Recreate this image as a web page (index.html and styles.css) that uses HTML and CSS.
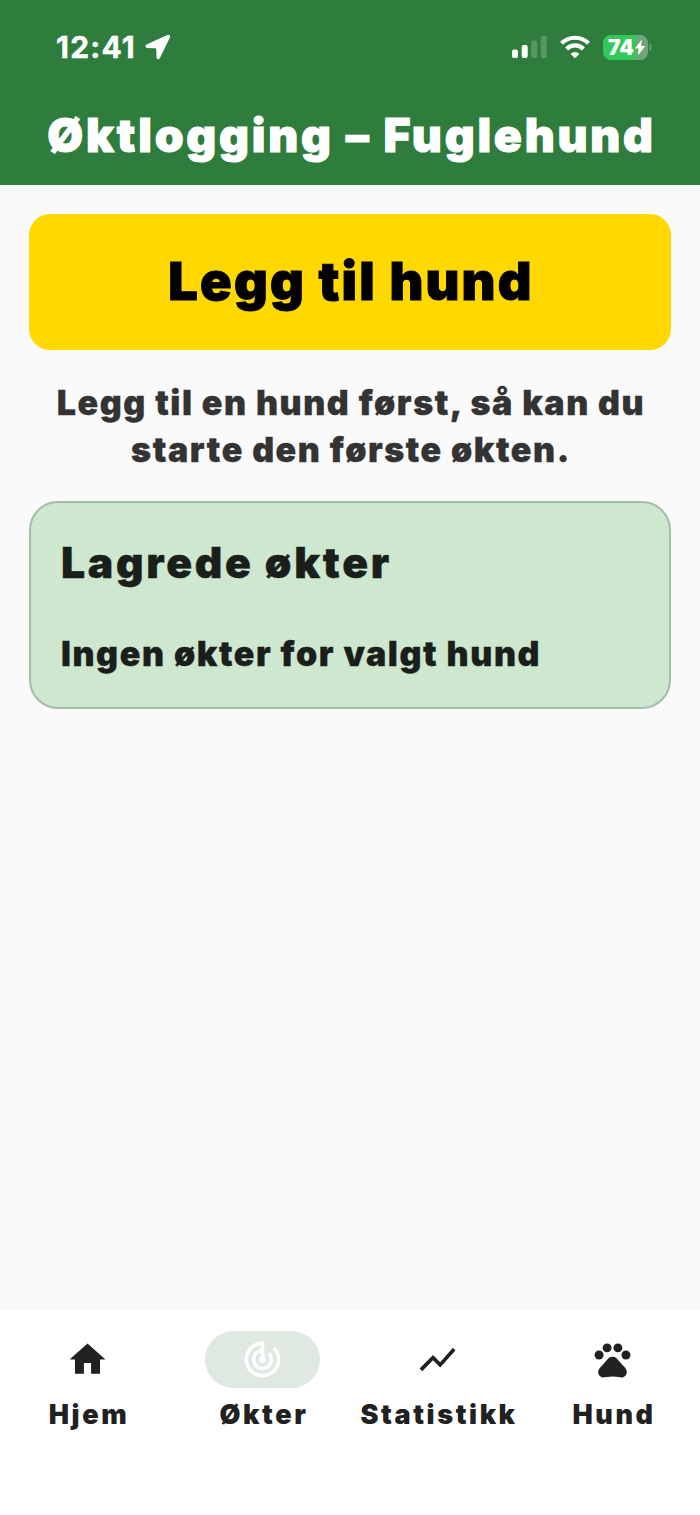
FILE: index.html
```html
<!DOCTYPE html>
<html lang="no">
<head>
    <meta charset="utf-8">
    <title>Øktlogging – Fuglehund</title>
    <link rel="stylesheet" href="styles.css">
</head>
<body>
    <header class="header">
        <div class="status-bar">
            <div class="status-left">
                <span class="clock">12:41</span>
                <svg width="26" height="26" viewBox="0 0 26 26"><path d="M22.300.9 1.500 10.400C-.1 11.200.3 13.800 2.200 13.900l7.800.3c1 0 1.300.3 1.300 1.300l.2 8c.1 2 2.400 2.400 3.300.7L24.900 3.500C25.700 1.700 24.100.1 22.300.9z" fill="#fff"/></svg>
            </div>
            <div class="status-right">
                <svg width="35" height="24" viewBox="0 0 35 24" fill="#fff">
                    <rect x="0" y="14.500" width="6" height="8.500" rx="2"/>
                    <rect x="9.700" y="10" width="6" height="13" rx="2"/>
                    <rect x="19.200" y="5.500" width="6" height="17.500" rx="2" opacity=".2"/>
                    <rect x="28.800" y="0.500" width="6" height="22.500" rx="2" opacity=".2"/>
                </svg>
                <svg class="wifi" width="30" height="24" viewBox="0 0 30 24" fill="none" stroke="#fff" stroke-width="4.200">
                    <path d="M1.500 8.300a19.200 19.200 0 0 1 27 0"/>
                    <path d="M6.600 13.900a12 12 0 0 1 16.800 0"/>
                    <path d="M15 23.300l-4.500-4.400a6.400 6.400 0 0 1 9 0z" fill="#fff" stroke="none"/>
                </svg>
                <div class="battery">
                    <span>74</span>
                    <svg width="12" height="17" viewBox="0 0 12 17"><path d="M8 .5.8 9.500h4L3.800 16.500 11.300 7H7z" fill="#fff"/></svg>
                </div>
                <div class="battery-tip"></div>
            </div>
        </div>
        <h1>Øktlogging – Fuglehund</h1>
    </header>

    <main class="content">
        <button class="add-btn">Legg til hund</button>
        <p class="hint">Legg til en hund først, så kan du<br>starte den første økten.</p>
        <section class="card">
            <h2>Lagrede økter</h2>
            <p>Ingen økter for valgt hund</p>
        </section>
    </main>

    <nav class="tabs">
        <a class="tab">
            <span class="tab-icon">
                <svg viewBox="0 0 24 24"><path d="M10 20v-6h4v6h5v-8h3L12 3 2 12h3v8z"/></svg>
            </span>
            <span class="tab-label">Hjem</span>
        </a>
        <a class="tab active">
            <span class="tab-icon">
                <svg viewBox="0 0 24 24"><path d="M19.070 4.930l-1.410 1.410C19.100 7.790 20 9.790 20 12c0 4.420-3.580 8-8 8s-8-3.580-8-8c0-4.080 3.050-7.440 7-7.930v2.020C8.160 6.570 6 9.030 6 12c0 3.310 2.690 6 6 6s6-2.690 6-6c0-1.660-.67-3.160-1.760-4.240l-1.410 1.410C15.550 9.900 16 10.900 16 12c0 2.210-1.790 4-4 4s-4-1.790-4-4c0-1.860 1.280-3.410 3-3.860v2.140c-.6.35-1 .98-1 1.720 0 1.100.9 2 2 2s2-.9 2-2c0-.74-.4-1.380-1-1.720V2h-1C6.480 2 2 6.480 2 12s4.480 10 10 10 10-4.480 10-10c0-2.760-1.120-5.260-2.930-7.070z"/></svg>
            </span>
            <span class="tab-label">Økter</span>
        </a>
        <a class="tab">
            <span class="tab-icon">
                <svg viewBox="0 0 24 24"><path d="M3.500 18.490l6-6.010 4 4L22 6.920l-1.410-1.410-7.090 7.970-4-4L2 16.990z"/></svg>
            </span>
            <span class="tab-label">Statistikk</span>
        </a>
        <a class="tab">
            <span class="tab-icon">
                <svg viewBox="0 0 24 24">
                    <circle cx="4.500" cy="9.500" r="2.500"/>
                    <circle cx="9" cy="5.500" r="2.500"/>
                    <circle cx="15" cy="5.500" r="2.500"/>
                    <circle cx="19.500" cy="9.500" r="2.500"/>
                    <path d="M17.340 14.860c-.87-1.020-1.600-1.890-2.480-2.910-.46-.54-1.050-1.080-1.750-1.320-.11-.04-.22-.07-.33-.09-.25-.04-.52-.04-.78-.04s-.53 0-.79.050c-.11.020-.22.050-.33.090-.7.240-1.280.78-1.750 1.320-.87 1.020-1.600 1.890-2.480 2.910-1.310 1.310-2.920 2.760-2.620 4.790.29 1.020 1.020 2.030 2.330 2.320.73.150 3.060-.44 5.540-.44h.18c2.480 0 4.810.58 5.540.44 1.310-.29 2.040-1.310 2.330-2.320.31-2.040-1.300-3.490-2.610-4.800z"/>
                </svg>
            </span>
            <span class="tab-label">Hund</span>
        </a>
    </nav>
</body>
</html>
```

FILE: styles.css
```css
* {
    box-sizing: border-box;
}

body {
    margin: 0;
    height: 1515px;
    display: flex;
    flex-direction: column;
    font-family: Inter, "Liberation Sans", sans-serif;
    background-color: #fafafa;
    color: #1b1f1c;
}

h1, h2, p {
    margin: 0;
}

.header {
    height: 185px;
    background-color: #2e7d3c;
    color: #fff;
}

.status-bar {
    display: flex;
    justify-content: space-between;
    align-items: center;
    height: 94px;
    padding: 0 48px 0 56px;
}

.status-left, .status-right {
    display: flex;
    align-items: center;
}

.clock {
    font-size: 30px;
    font-weight: 700;
    letter-spacing: 1.200px;
    margin-right: 9px;
    -webkit-text-stroke: 0.400px #fff;
}

.wifi {
    margin: 0 13px;
}

.battery {
    display: flex;
    align-items: center;
    width: 45px;
    height: 25px;
    padding-left: 5px;
    border-radius: 8px;
    background: linear-gradient(to right, #34c759 74%, #6fa578 74%);
    font-size: 21px;
    font-weight: 900;
}

.battery-tip {
    width: 3px;
    height: 8px;
    margin-left: 1px;
    border-radius: 0 3px 3px 0;
    background-color: #58965f;
}

h1 {
    font-size: 46.300px;
    font-weight: 900;
    line-height: 82px;
    letter-spacing: 2.750px;
    text-indent: 3px;
    text-align: center;
    white-space: nowrap;
    -webkit-text-stroke: 1px #fff;
}

.content {
    flex: 1;
    padding: 29px 29px 0;
}

.add-btn {
    display: block;
    width: 100%;
    height: 136px;
    padding: 0 0 3px 2px;
    border: none;
    border-radius: 21px;
    background-color: #ffd800;
    color: #000;
    font-family: inherit;
    font-size: 52.300px;
    font-weight: 900;
    letter-spacing: 2.150px;
    -webkit-text-stroke: 1px #000;
    cursor: pointer;
}

.hint {
    margin-top: 30px;
    padding-left: 2px;
    color: #333;
    font-size: 34px;
    font-weight: 900;
    line-height: 46.500px;
    letter-spacing: 1.550px;
    text-align: center;
    white-space: nowrap;
    -webkit-text-stroke: 0.300px #333;
}

.card {
    height: 208px;
    margin-top: 28px;
    padding: 30px;
    border: 2px solid #a5bca8;
    border-radius: 29px;
    background-color: #cee8d0;
}

.card h2 {
    font-size: 42.700px;
    font-weight: 900;
    line-height: 60px;
    letter-spacing: 2.700px;
    -webkit-text-stroke: 0.400px #1b1f1c;
}

.card p {
    margin-top: 31px;
    font-size: 34px;
    font-weight: 900;
    line-height: 60px;
    letter-spacing: 1.570px;
    -webkit-text-stroke: 0.300px #1b1f1c;
}

.tabs {
    display: flex;
    height: 205px;
    padding-top: 21px;
    background-color: #fff;
}

.tab {
    flex: 1;
    display: flex;
    flex-direction: column;
    align-items: center;
    color: #212121;
}

.tab-label {
    padding-left: 3px;
    font-size: 27px;
    font-weight: 900;
    line-height: 53px;
    letter-spacing: 2.600px;
}

.tab-icon {
    display: flex;
    align-items: center;
    justify-content: center;
    width: 115px;
    height: 57px;
    border-radius: 29px;
}

.tab-icon svg {
    width: 43px;
    height: 43px;
    fill: #212121;
}

.active .tab-icon {
    background-color: #dfe9e2;
}

.active .tab-icon svg {
    fill: #fff;
}
```
